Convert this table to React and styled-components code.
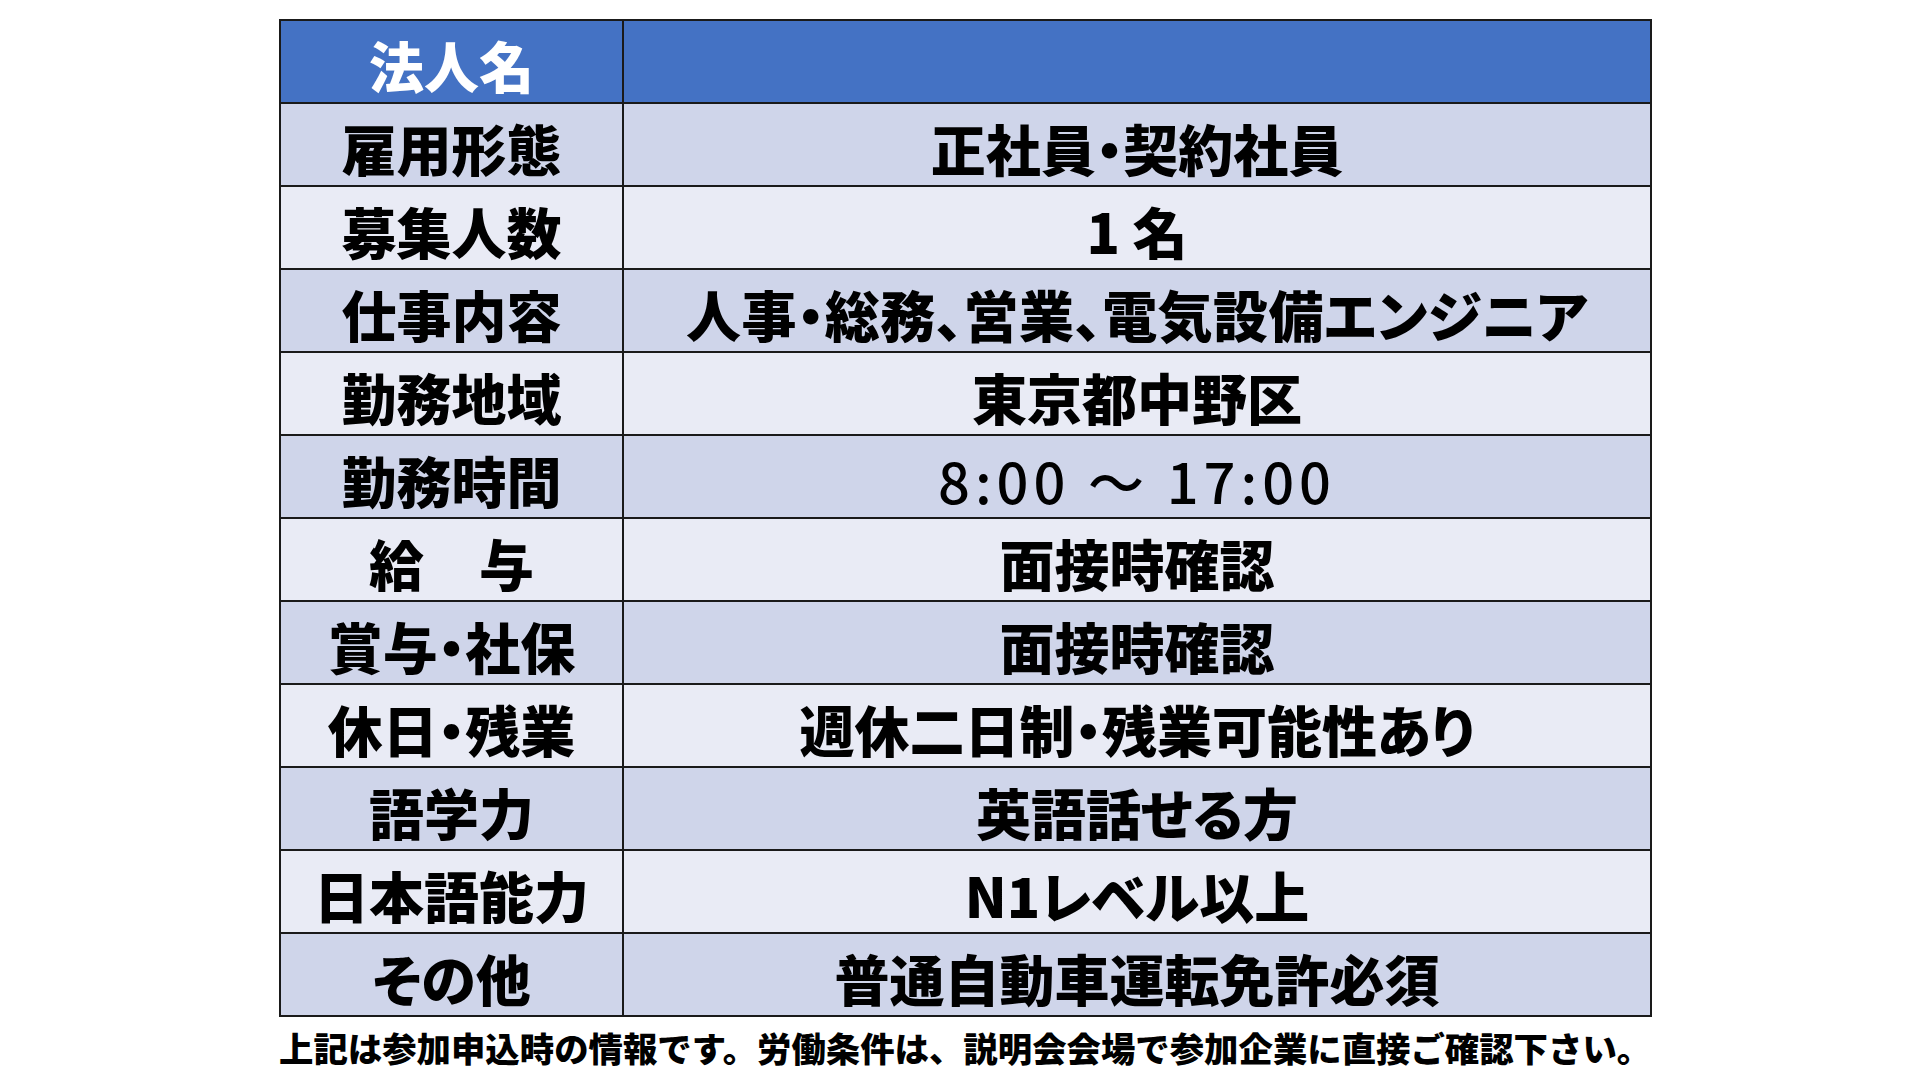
import React from 'react';
import styled, {createGlobalStyle} from 'styled-components';

const GlobalStyle = createGlobalStyle`
  body {
    margin: 0;
    background: #ffffff;
    font-family: "Noto Sans CJK JP", "Noto Sans", sans-serif;
    color: #000;
  }
`

const Page = styled.div`
  width: 1920px;
  height: 1080px;
  padding: 19px 0 0 279px;
  box-sizing: border-box;
`

const Table = styled.table`
  width: 1373px;
  border-collapse: collapse;
  table-layout: fixed;
`

const shades = {
  head: '#4472c4',
  dark: '#cfd5ea',
  light: '#e9ebf5',
}

const Row = styled.tr`
  height: 83px;
  background: ${(p) => shades[p.$shade]};
`

const Cell = styled.td`
  border: 2px solid #1a1a1a;
  padding: 6px 0 0 0;
  text-align: center;
  vertical-align: middle;
  font-size: 55px;
  font-weight: 900;
  line-height: 1;
  font-feature-settings: "palt";
  letter-spacing: ${(p) => (p.$tight ? '0.4px' : '0')};
  color: ${(p) => (p.$head ? '#ffffff' : '#000000')};
  white-space: nowrap;
`

const LabelCell = styled(Cell)`
  width: 341px;
`

const Time = styled.span`
  font-weight: 500;
  font-size: 56px;
  letter-spacing: 5px;
  font-feature-settings: normal;
`

const Note = styled.p`
  margin: 10px 0 0 0;
  font-size: 34.4px;
  font-weight: 900;
  line-height: 1.2;
  white-space: nowrap;
`

const rows = [
  ['雇用形態', '正社員・契約社員'],
  ['募集人数', '1 名'],
  ['仕事内容', '人事・総務、営業、電気設備エンジニア'],
  ['勤務地域', '東京都中野区'],
  ['勤務時間', null],
  ['給　与', '面接時確認'],
  ['賞与・社保', '面接時確認'],
  ['休日・残業', '週休二日制・残業可能性あり'],
  ['語学力', '英語話せる方'],
  ['日本語能力', 'N1レベル以上'],
  ['その他', '普通自動車運転免許必須'],
]

const App = () => {
  return (
    <Page>
      <GlobalStyle />
      <Table>
        <tbody>
          <Row $shade='head'>
            <LabelCell $head>法人名</LabelCell>
            <Cell $head></Cell>
          </Row>
          {rows.map(([label, value], i) => (
            <Row key={label} $shade={i % 2 === 0 ? 'dark' : 'light'}>
              <LabelCell>{label}</LabelCell>
              <Cell $tight={label === '仕事内容'}>
                {value === null ? <Time>8:00 ～ 17:00</Time> : value}
              </Cell>
            </Row>
          ))}
        </tbody>
      </Table>
      <Note>上記は参加申込時の情報です。労働条件は、説明会会場で参加企業に直接ご確認下さい。</Note>
    </Page>
  )
}

export default App;
